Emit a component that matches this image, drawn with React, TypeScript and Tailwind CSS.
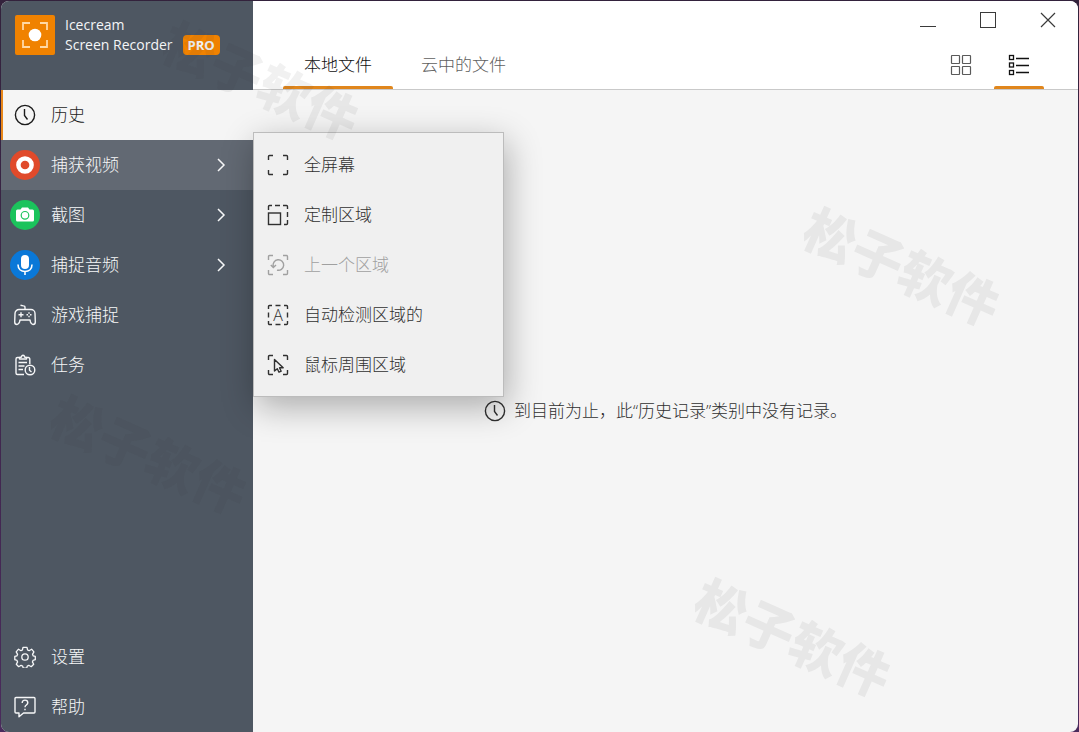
import type { ReactNode } from "react";

type SidebarItem = {
  label: string;
  icon: ReactNode;
  state?: "selected" | "open";
  hasMenu?: boolean;
};

type RegionItem = {
  label: string;
  icon: ReactNode;
  disabled?: boolean;
};

function ClockIcon() {
  return (
    <svg width="22" height="22" viewBox="0 0 22 22" fill="none" stroke="currentColor" strokeWidth="1.4">
      <circle cx="11" cy="11" r="9.6" />
      <path d="M10.5 5v6.5l3 4" />
    </svg>
  );
}

function RecordIcon() {
  return (
    <svg width="30" height="30" viewBox="0 0 30 30">
      <circle cx="15" cy="15" r="15" fill="#e04a2b" />
      <circle cx="15" cy="15" r="6.6" fill="none" stroke="#fff" strokeWidth="4.5" />
    </svg>
  );
}

function CameraIcon() {
  return (
    <svg width="30" height="30" viewBox="0 0 30 30">
      <circle cx="15" cy="15" r="15" fill="#1bc35c" />
      <path d="M10.5 9.500 12 7.500h6l1.500 2H22.500a1.500 1.500 0 0 1 1.500 1.500v9a1.500 1.500 0 0 1-1.500 1.500h-15A1.500 1.500 0 0 1 6 20v-9a1.500 1.500 0 0 1 1.500-1.500z" fill="#fff" />
      <circle cx="15" cy="15.3" r="3.8" fill="none" stroke="#1bc35c" strokeWidth="1.2" />
    </svg>
  );
}

function MicIcon() {
  return (
    <svg width="30" height="30" viewBox="0 0 30 30">
      <circle cx="15" cy="15" r="15" fill="#0a78d8" />
      <rect x="11" y="5" width="8" height="14" rx="4" fill="#fff" />
      <path d="M8 14.500c0 4.500 3 7 7 7s7-2.500 7-7M15 21.500V25" fill="none" stroke="#fff" strokeWidth="1.6" />
    </svg>
  );
}

function GamepadIcon() {
  return (
    <svg width="22" height="22" viewBox="0 0 22 22" fill="none" stroke="currentColor" strokeWidth="1.4" strokeLinejoin="round">
      <path d="M5 5.500h12a4 4 0 0 1 4 4l.3 8.500c0 1.700-1 2.500-2.300 2.500-1.500 0-2-1-2.500-2.500L16 16H6l-.5 2C5 19.500 4.500 20.500 3 20.500 1.700 20.500.7 19.700.7 18L1 9.500a4 4 0 0 1 4-4z" />
      <path d="M11 5.500V3.500c0-1-.5-1.600-1.500-1.600L6.500 1.200" />
      <path d="M7 8.300v5M4.500 10.800h5M15 8.300v1.500M15 11.800v1.500M12.500 10.800H14M16 10.800h1.500" />
    </svg>
  );
}

function TasksIcon() {
  return (
    <svg width="22" height="22" viewBox="0 0 22 22" fill="none" stroke="currentColor" strokeWidth="1.4" strokeLinejoin="round">
      <path d="M5.500 3.500H3.500A1.500 1.500 0 0 0 2 5v14a1.500 1.500 0 0 0 1.500 1.500H10M12.500 3.500h1.800A1.500 1.500 0 0 1 15.800 5v5" />
      <path d="M5.500 5V3.500L7.500 3C7.500 .7 10.500 .7 10.500 3l2 .5V5z" />
      <path d="M4.500 8.500h8.500M4.500 12h6M4.500 15.500H9" />
      <circle cx="16" cy="16" r="4.8" />
      <path d="M15.500 13v3.300l2 1.700" />
    </svg>
  );
}

function GearIcon() {
  return (
    <svg width="22" height="22" viewBox="0 0 22 22" fill="none" stroke="currentColor" strokeWidth="1.3" strokeLinejoin="round">
      <circle cx="11" cy="11" r="3.2" />
      <path d="M9 1.300h4l.6 2.700 1.500.7 2.500-1.500 2.300 2.700-1.400 2.400.6 1.500 2.200.6v3.300l-2.300.7-.6 1.500 1.300 2.400-2.500 2.400-2.400-1.400-1.500.7-.6 2.200H9.300l-.7-2.200-1.500-.7-2.400 1.400-2.400-2.400 1.300-2.400-.6-1.500L.8 13.700v-3.300l2.200-.6.6-1.500-1.400-2.400 2.300-2.700L7 4.700 8.400 4z" />
    </svg>
  );
}

function HelpIcon() {
  return (
    <svg width="22" height="22" viewBox="0 0 22 22" fill="none" stroke="currentColor" strokeWidth="1.4" strokeLinejoin="round">
      <path d="M2 1.500h18a1 1 0 0 1 1 1V16a1 1 0 0 1-1 1H9.500L5 20.800V17H2a1 1 0 0 1-1-1V2.500a1 1 0 0 1 1-1z" />
      <path d="M8.200 7c0-1.800 1.100-2.900 2.800-2.900s2.800 1 2.800 2.700c0 2.200-2.800 2.200-2.800 4.400M11 12.700v1.500" />
    </svg>
  );
}

function RegionIcon({ children }: { children?: ReactNode }) {
  return (
    <svg width="22" height="22" viewBox="0 0 22 22" fill="none" stroke="currentColor" strokeWidth="1.4">
      {children}
    </svg>
  );
}

const corners = "M1.500 6V2.500a1 1 0 0 1 1-1H6M16 1.500h3.500a1 1 0 0 1 1 1V6M20.500 16v3.500a1 1 0 0 1-1 1H16M6 20.500H2.500a1 1 0 0 1-1-1V16";

const sidebarItems: SidebarItem[] = [
  { label: "历史", icon: <ClockIcon />, state: "selected" },
  { label: "捕获视频", icon: <RecordIcon />, state: "open", hasMenu: true },
  { label: "截图", icon: <CameraIcon />, hasMenu: true },
  { label: "捕捉音频", icon: <MicIcon />, hasMenu: true },
  { label: "游戏捕捉", icon: <GamepadIcon /> },
  { label: "任务", icon: <TasksIcon /> },
];

const footerItems: SidebarItem[] = [
  { label: "设置", icon: <GearIcon /> },
  { label: "帮助", icon: <HelpIcon /> },
];

const regionItems: RegionItem[] = [
  {
    label: "全屏幕",
    icon: (
      <RegionIcon>
        <path d={corners} />
      </RegionIcon>
    ),
  },
  {
    label: "定制区域",
    icon: (
      <RegionIcon>
        <path d="M1.500 6V2.500a1 1 0 0 1 1-1H5M8 1.500h5M16 1.500h3.500a1 1 0 0 1 1 1V5M20.500 8v5M20.500 16v3.500a1 1 0 0 1-1 1H17" />
        <rect x="1.500" y="9" width="12" height="11.500" />
      </RegionIcon>
    ),
  },
  {
    label: "上一个区域",
    disabled: true,
    icon: (
      <RegionIcon>
        <path d={corners} />
        <path d="M6.300 12.500a5.300 5.300 0 1 1 3.700 3.600M3.800 11l2.500 2.500L9 11" />
      </RegionIcon>
    ),
  },
  {
    label: "自动检测区域的",
    icon: (
      <RegionIcon>
        <path d="M1.500 5V2.500a1 1 0 0 1 1-1H5M8.500 1.500h5M17 1.500h2.500a1 1 0 0 1 1 1V5M20.500 8.500v5M20.500 17v2.500a1 1 0 0 1-1 1H17M13.500 20.500h-5M5 20.500H2.500a1 1 0 0 1-1-1V17M1.500 13.500v-5" />
        <text x="11" y="17" textAnchor="middle" fontSize="16" fill="currentColor" stroke="none" fontFamily="Open Sans, sans-serif">
          A
        </text>
      </RegionIcon>
    ),
  },
  {
    label: "鼠标周围区域",
    icon: (
      <RegionIcon>
        <path d={corners} />
        <path d="M7.500 5.500v11.500l2.800-2.300 1.700 3.500 2.200-1-1.700-3.400h3.700z" strokeLinejoin="round" />
      </RegionIcon>
    ),
  },
];

function RegionMenu() {
  return (
    <div
      role="menu"
      className="absolute -top-2 left-full w-[251px] border border-[#bcbcbc] bg-[#f0f0f0] pt-[7px] pb-1.5 text-[#303030] shadow-[3px_10px_32px_rgba(0,0,0,0.3)]"
    >
      {regionItems.map((item) => (
        <button
          key={item.label}
          type="button"
          role="menuitem"
          disabled={item.disabled}
          className="flex h-[50px] w-full items-center gap-[15px] px-[13px] text-left disabled:text-[#a0a0a0]"
        >
          {item.icon}
          {item.label}
        </button>
      ))}
    </div>
  );
}

function SidebarRow({ item }: { item: SidebarItem }) {
  const tone =
    item.state === "selected"
      ? "bg-[#f5f5f5] text-[#1c1c1c] border-[#e8871a]"
      : item.state === "open"
        ? "bg-[#626973] text-[#f6f7f8] border-transparent"
        : "text-[#f6f7f8] border-transparent";

  return (
    <li className="relative">
      <button type="button" className={`flex h-[50px] w-full items-center border-l-2 pr-[21px] text-left ${tone}`}>
        <span className="flex w-11 shrink-0 justify-center">{item.icon}</span>
        <span className="ml-1 flex-1">{item.label}</span>
        {item.hasMenu ? (
          <svg width="22" height="22" viewBox="0 0 22 22" fill="none" stroke="currentColor" strokeWidth="1.5">
            <path d="m8 5 6 6-6 6" />
          </svg>
        ) : null}
      </button>
      {item.state === "open" ? <RegionMenu /> : null}
    </li>
  );
}

function Sidebar() {
  return (
    <aside className="relative z-10 flex w-[252px] shrink-0 flex-col bg-[#4e5762]">
      <div className="flex h-[89px] items-start gap-[10px] pt-[14px] pl-[14px] text-[#f4f5f7]">
        <svg width="40" height="40" viewBox="0 0 40 40" fill="none">
          <rect width="40" height="40" rx="2" fill="#f08200" />
          <path d="M8 15V8h7M25 8h7v7M32 25v7h-7M15 32H8v-7" stroke="#ffd9a6" strokeWidth="1.8" />
          <circle cx="20" cy="20" r="6.3" fill="#fff" />
        </svg>
        <div className="text-[14px] leading-5 font-normal">
          <div>Icecream</div>
          <div className="flex items-center gap-[10px]">
            Screen Recorder
            <span className="rounded bg-[#f08200] px-[5px] text-[13px] leading-5 font-bold">PRO</span>
          </div>
        </div>
      </div>
      <nav className="flex flex-1 flex-col justify-between">
        <ul>
          {sidebarItems.map((item) => (
            <SidebarRow key={item.label} item={item} />
          ))}
        </ul>
        <ul>
          {footerItems.map((item) => (
            <SidebarRow key={item.label} item={item} />
          ))}
        </ul>
      </nav>
    </aside>
  );
}

function WindowButtons() {
  return (
    <div className="flex h-[39px] justify-end pb-0.5 text-[#3a3a3a]">
      <button type="button" aria-label="Minimize" className="flex w-[60px] items-center justify-center">
        <svg width="16" height="16" viewBox="0 0 16 16" stroke="currentColor">
          <path d="M0 14.500h16" />
        </svg>
      </button>
      <button type="button" aria-label="Maximize" className="flex w-[60px] items-center justify-center">
        <svg width="16" height="16" viewBox="0 0 16 16" fill="none" stroke="currentColor">
          <rect x=".5" y=".5" width="15" height="15" />
        </svg>
      </button>
      <button type="button" aria-label="Close" className="flex w-[60px] items-center justify-center">
        <svg width="16" height="16" viewBox="0 0 16 16" stroke="currentColor" strokeWidth="1.2">
          <path d="m1 1 14 14M15 1 1 15" />
        </svg>
      </button>
    </div>
  );
}

function Header() {
  return (
    <header className="border-b border-[#c9c9c9] bg-white">
      <WindowButtons />
      <div className="flex h-[49px] justify-between pr-[34px] pl-[30px]">
        <div role="tablist" className="flex gap-[7px]">
          <button type="button" role="tab" aria-selected="true" className="relative px-[21px] text-[#101010]">
            本地文件
            <span className="absolute inset-x-0 bottom-0 h-[3px] rounded-t-xs bg-[#e0861c]" />
          </button>
          <button type="button" role="tab" aria-selected="false" className="px-[21px] text-[#606060]">
            云中的文件
          </button>
        </div>
        <div className="flex gap-2">
          <button type="button" aria-label="Grid view" className="flex w-[50px] items-center justify-center text-[#5a5a5a]">
            <svg width="22" height="22" viewBox="0 0 22 22" fill="none" stroke="currentColor" strokeWidth="1.2">
              <rect x="1.500" y="1.500" width="8" height="8" rx=".5" />
              <rect x="12.500" y="1.500" width="8" height="8" rx=".5" />
              <rect x="1.500" y="12.500" width="8" height="8" rx=".5" />
              <rect x="12.500" y="12.500" width="8" height="8" rx=".5" />
            </svg>
          </button>
          <button type="button" aria-label="List view" className="relative flex w-[50px] items-center justify-center text-[#111]">
            <svg width="22" height="22" viewBox="0 0 22 22" fill="none" stroke="currentColor" strokeWidth="1.3">
              <rect x="1.500" y="1.500" width="4" height="4" />
              <rect x="1.500" y="9" width="4" height="4" />
              <rect x="1.500" y="16.500" width="4" height="4" />
              <path d="M8 4.500h13M8 11.500h13M8 18.500h13" />
            </svg>
            <span className="absolute inset-x-0 bottom-0 h-[3px] rounded-t-xs bg-[#e0861c]" />
          </button>
        </div>
      </div>
    </header>
  );
}

function Watermark({ place }: { place: string }) {
  return (
    <span
      aria-hidden="true"
      className={`pointer-events-none absolute z-20 -translate-x-1/2 -translate-y-1/2 rotate-24 text-[52px] leading-none font-black whitespace-nowrap text-[#343434]/7 ${place}`}
    >
      松子软件
    </span>
  );
}

export default function App() {
  return (
    <div className="flex min-h-screen bg-linear-to-b from-[#33223c] to-[#4a2a5c] pt-px pr-px pl-px font-['Open_Sans','Noto_Sans_CJK_SC',sans-serif] text-[17px] leading-6 font-light">
      <div className="relative flex flex-1 overflow-hidden rounded-lg bg-[#f5f5f5]">
        <Sidebar />
        <main className="flex min-w-0 flex-1 flex-col">
          <Header />
          <div className="flex flex-1 items-center justify-center gap-2 text-[#303030]">
            <ClockIcon />
            <p>到目前为止，此“历史记录”类别中没有记录。</p>
          </div>
        </main>
        <Watermark place="left-[260px] top-[80px]" />
        <Watermark place="left-[148px] top-[454px]" />
        <Watermark place="left-[901px] top-[266px]" />
        <Watermark place="left-[792px] top-[637px]" />
      </div>
    </div>
  );
}
